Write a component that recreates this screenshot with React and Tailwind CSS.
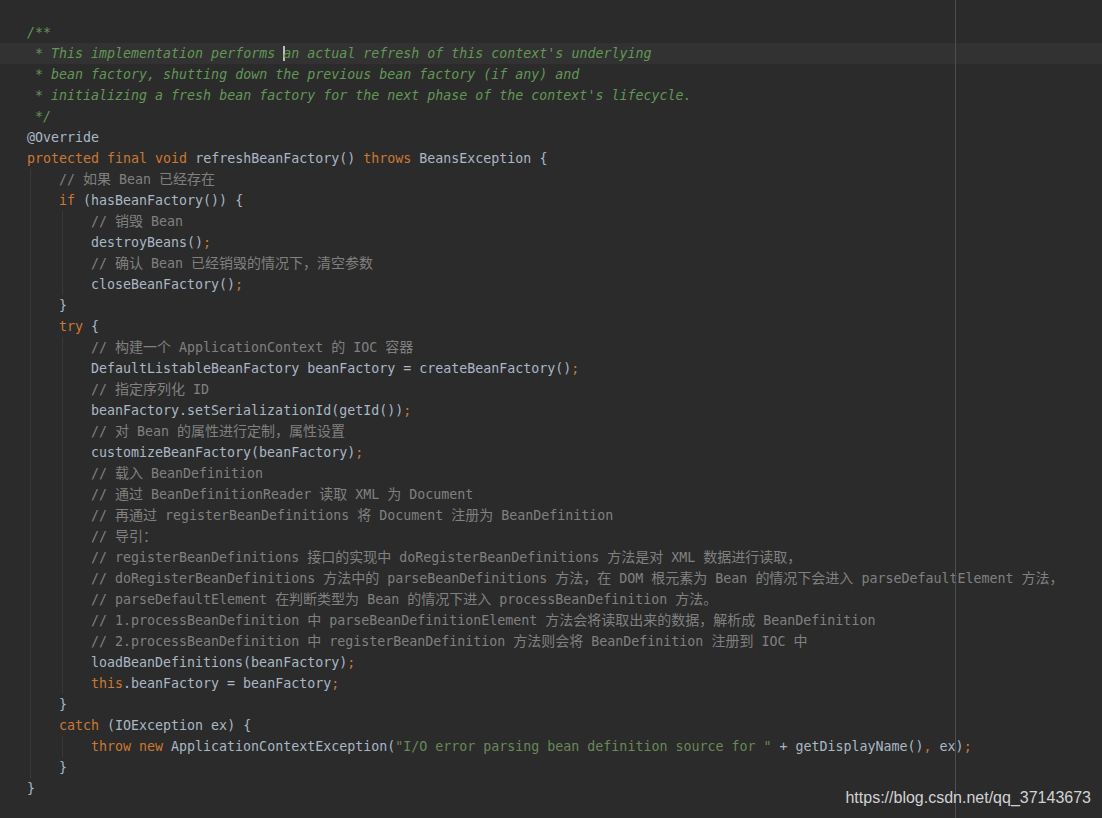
const K = "text-[#cc7832]";
const T = "text-[#a9b7c6]";
const C = "text-[#808080]";
const D = "text-[#629755] italic";
const S = "text-[#6a8759]";
const A = "text-[#a9b7c6]";

const lines = [
  [0, [[D, "/**"]]],
  [0, [[D, " * This implementation performs "], ["caret"], [D, "an actual refresh of this context's underlying"]]],
  [0, [[D, " * bean factory, shutting down the previous bean factory (if any) and"]]],
  [0, [[D, " * initializing a fresh bean factory for the next phase of the context's lifecycle."]]],
  [0, [[D, " */"]]],
  [0, [[A, "@Override"]]],
  [0, [[K, "protected final void "], [T, "refreshBeanFactory() "], [K, "throws "], [T, "BeansException {"]]],
  [1, [[C, "// 如果 Bean 已经存在"]]],
  [1, [[K, "if "], [T, "(hasBeanFactory()) {"]]],
  [2, [[C, "// 销毁 Bean"]]],
  [2, [[T, "destroyBeans()"], [K, ";"]]],
  [2, [[C, "// 确认 Bean 已经销毁的情况下，清空参数"]]],
  [2, [[T, "closeBeanFactory()"], [K, ";"]]],
  [1, [[T, "}"]]],
  [1, [[K, "try "], [T, "{"]]],
  [2, [[C, "// 构建一个 ApplicationContext 的 IOC 容器"]]],
  [2, [[T, "DefaultListableBeanFactory beanFactory = createBeanFactory()"], [K, ";"]]],
  [2, [[C, "// 指定序列化 ID"]]],
  [2, [[T, "beanFactory.setSerializationId(getId())"], [K, ";"]]],
  [2, [[C, "// 对 Bean 的属性进行定制，属性设置"]]],
  [2, [[T, "customizeBeanFactory(beanFactory)"], [K, ";"]]],
  [2, [[C, "// 载入 BeanDefinition"]]],
  [2, [[C, "// 通过 BeanDefinitionReader 读取 XML 为 Document"]]],
  [2, [[C, "// 再通过 registerBeanDefinitions 将 Document 注册为 BeanDefinition"]]],
  [2, [[C, "// 导引："]]],
  [2, [[C, "// registerBeanDefinitions 接口的实现中 doRegisterBeanDefinitions 方法是对 XML 数据进行读取，"]]],
  [2, [[C, "// doRegisterBeanDefinitions 方法中的 parseBeanDefinitions 方法，在 DOM 根元素为 Bean 的情况下会进入 parseDefaultElement 方法，"]]],
  [2, [[C, "// parseDefaultElement 在判断类型为 Bean 的情况下进入 processBeanDefinition 方法。"]]],
  [2, [[C, "// 1.processBeanDefinition 中 parseBeanDefinitionElement 方法会将读取出来的数据，解析成 BeanDefinition"]]],
  [2, [[C, "// 2.processBeanDefinition 中 registerBeanDefinition 方法则会将 BeanDefinition 注册到 IOC 中"]]],
  [2, [[T, "loadBeanDefinitions(beanFactory)"], [K, ";"]]],
  [2, [[K, "this"], [T, ".beanFactory = beanFactory"], [K, ";"]]],
  [1, [[T, "}"]]],
  [1, [[K, "catch "], [T, "(IOException ex) {"]]],
  [2, [[K, "throw new "], [T, "ApplicationContextException("], [S, "\"I/O error parsing bean definition source for \""], [T, " + getDisplayName()"], [K, ", "], [T, "ex)"], [K, ";"]]],
  [1, [[T, "}"]]],
  [0, [[T, "}"]]],
];

// CJK runs get a slightly larger size, like the IDE's fallback font
const Text = ({ text }) => {
  const parts = text.split(/([\u3000-\u303f\u4e00-\u9fff\uff00-\uffef]+)/);
  return parts.map((p, i) =>
    i % 2 === 1 ? (
      <span key={i} className="text-[14px]">{p}</span>
    ) : (
      p
    )
  );
};

const Indent = () => (
  <span className="flex w-[32px] h-[21px] shrink-0 pl-[3px]">
    <span className="w-px h-full bg-[#393939]" />
  </span>
);

const Line = ({ level, segs, current }) => (
  <div className={`flex items-center h-[21px] pl-[27px] whitespace-pre ${current ? "bg-[#323232]" : ""}`}>
    {Array.from({ length: level }).map((_, i) => (
      <Indent key={i} />
    ))}
    {segs.map(([cls, text], i) =>
      cls === "caret" ? (
        <span key={i} className="w-[2px] h-[15px] -mr-[2px] bg-[#bbbbbb] shrink-0" />
      ) : (
        <span key={i} className={cls}>
          <Text text={text} />
        </span>
      )
    )}
  </div>
);

export default function App() {
  return (
    <div className="relative w-[1102px] h-[818px] overflow-hidden bg-[#2b2b2b]">
      <div
        className="pt-[22px] text-[13.3px] leading-[21px]"
        style={{ fontFamily: "'DejaVu Sans Mono', 'Noto Sans CJK SC', monospace" }}
      >
        {lines.map(([level, segs], i) => (
          <Line key={i} level={level} segs={segs} current={i === 1} />
        ))}
      </div>

      {/* right margin guide */}
      <div className="absolute left-[955px] top-0 bottom-0 w-px bg-[#4e4e4e]" />

      <div
        className="absolute top-[789px] right-[11px] text-[16px] leading-[18px] text-[#d2d2d2]"
        style={{ fontFamily: "'Liberation Sans', Arial, sans-serif" }}
      >
        https://blog.csdn.net/qq_37143673
      </div>
    </div>
  );
}
